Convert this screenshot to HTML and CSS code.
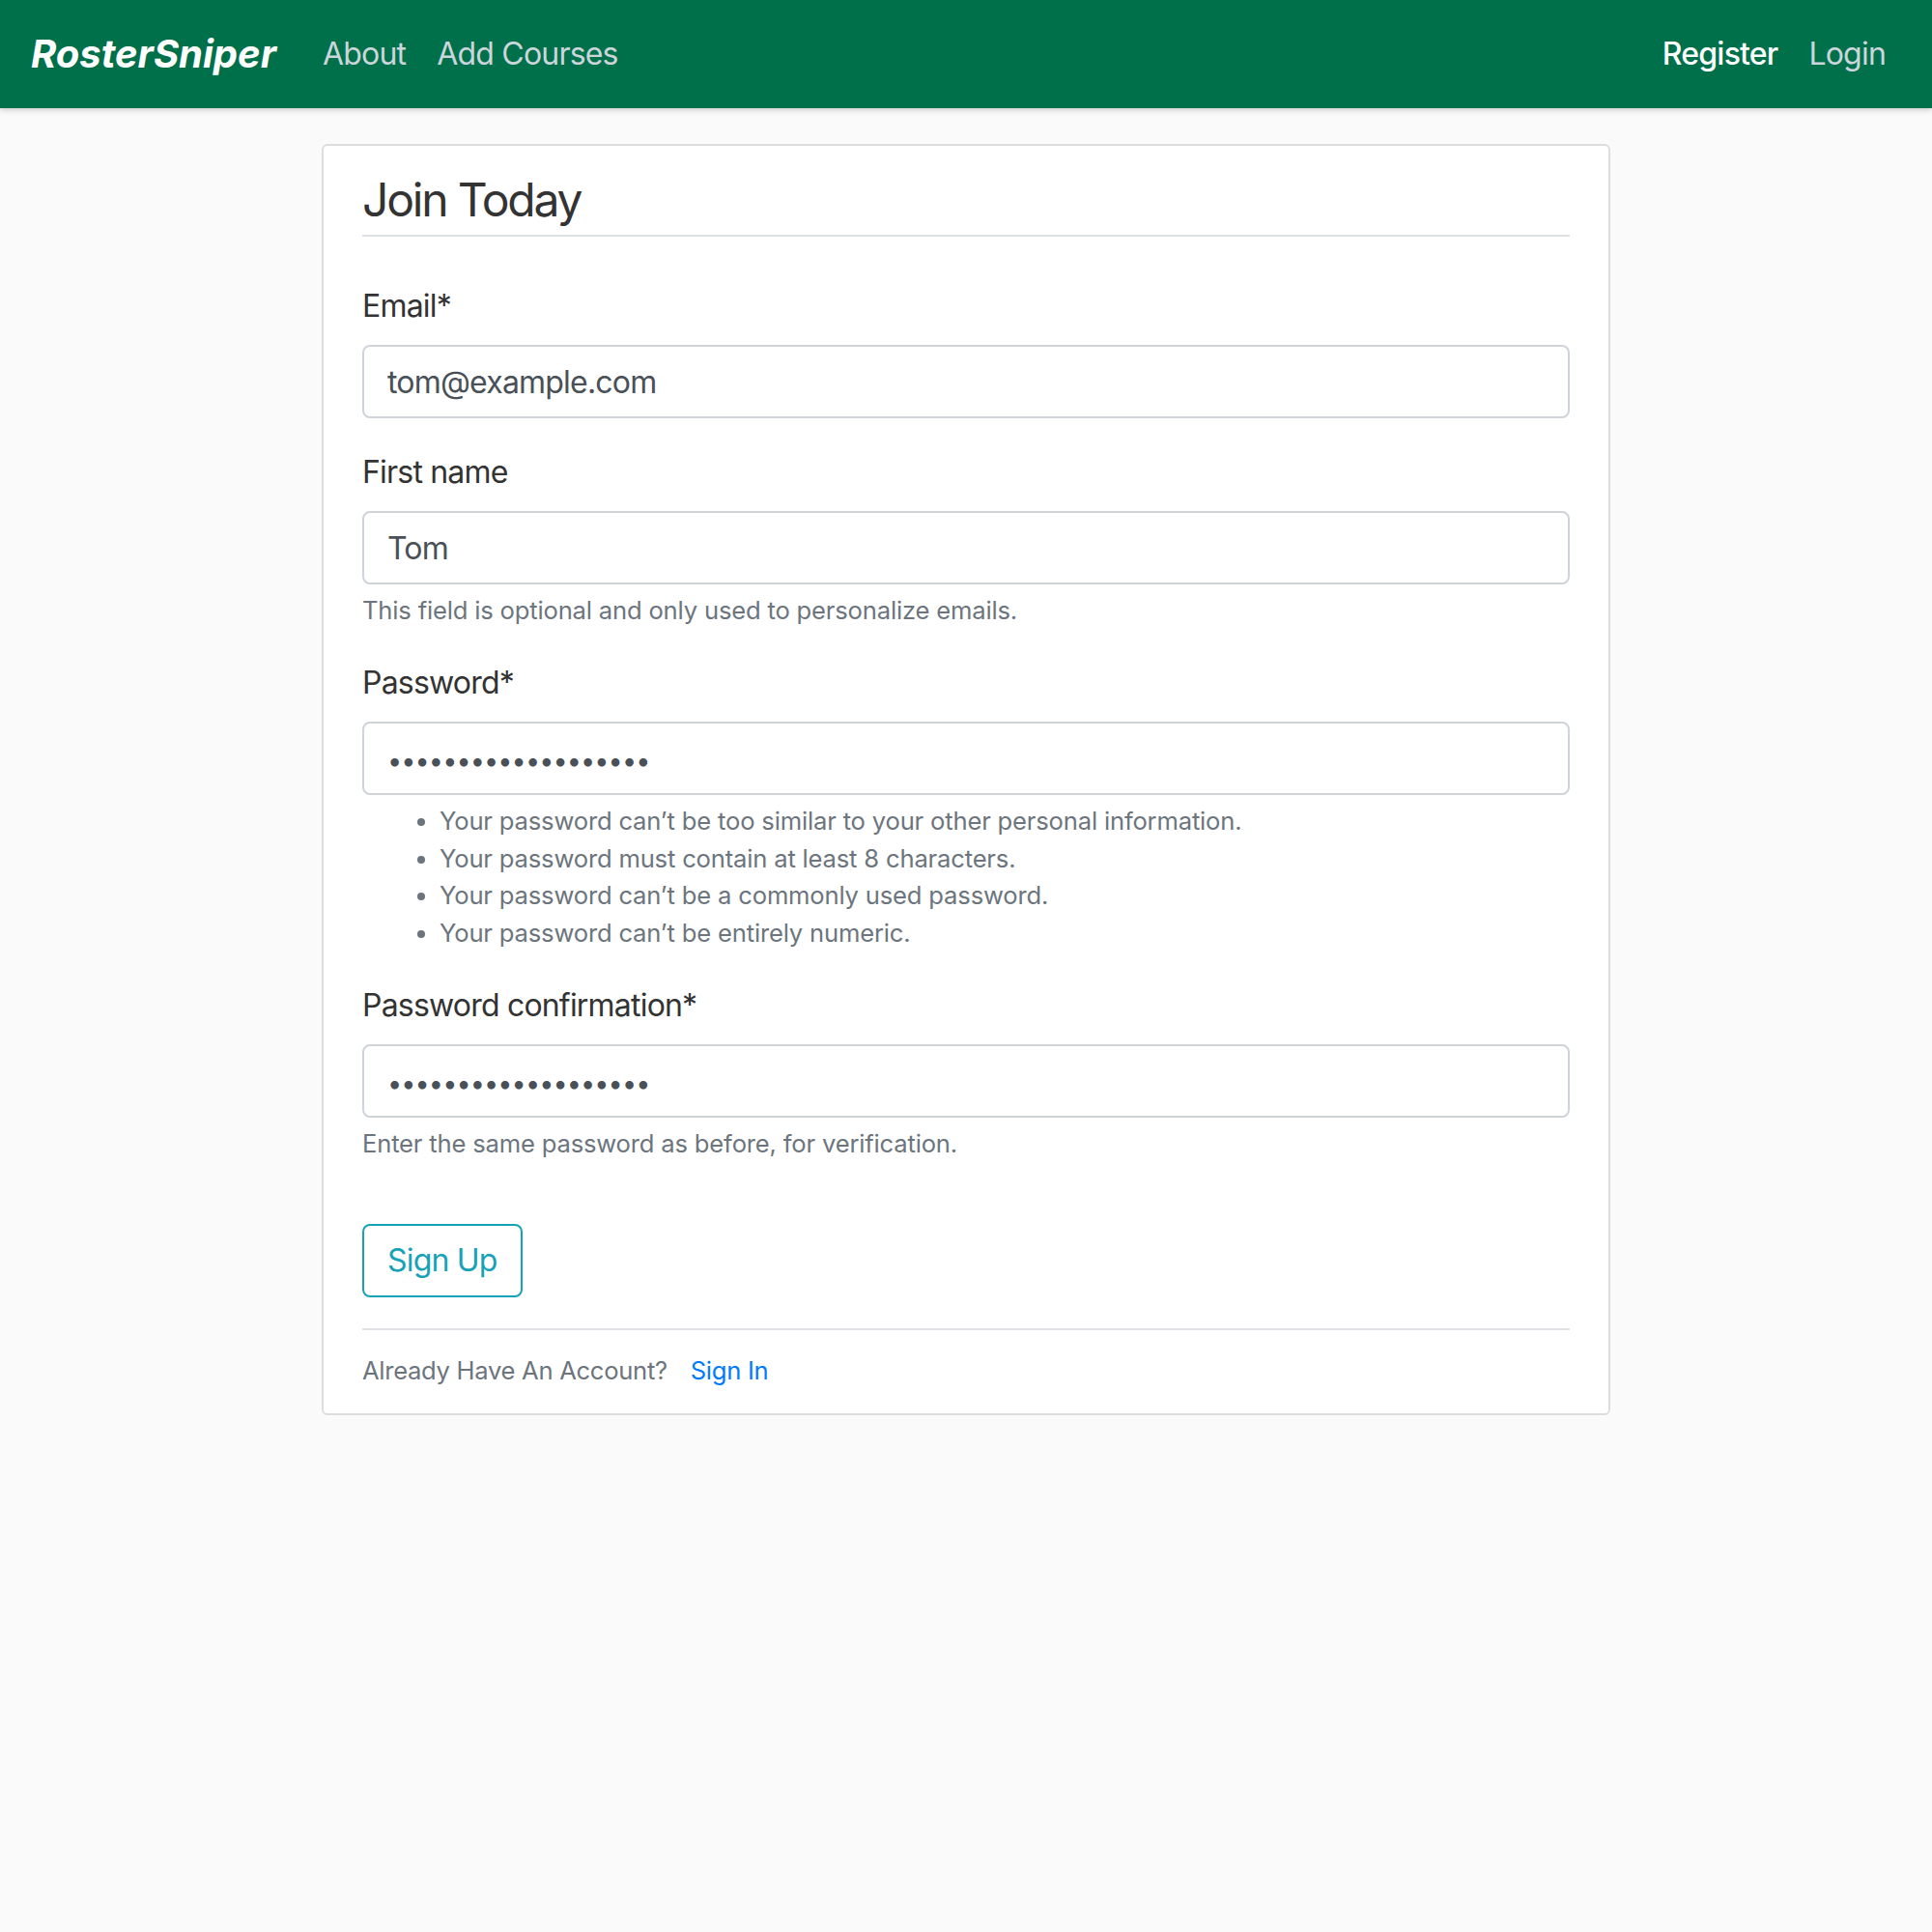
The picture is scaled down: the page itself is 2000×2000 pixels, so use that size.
FILE: index.html
```html
<!DOCTYPE html>
<html lang="en">
<head>
<meta charset="utf-8">
<title>Register - RosterSniper</title>
<link rel="stylesheet" href="styles.css">
</head>
<body>
<header class="site-header">
  <nav class="navbar">
    <a class="brand" href="#">RosterSniper</a>
    <div class="nav-left">
      <a class="nav-link" href="#">About</a>
      <a class="nav-link" href="#">Add Courses</a>
    </div>
    <div class="nav-right">
      <a class="nav-link active" href="#">Register</a>
      <a class="nav-link" href="#">Login</a>
    </div>
  </nav>
</header>
<main class="container">
  <div class="content-section">
    <form>
      <fieldset class="fieldset">
        <div class="legend">Join Today</div>
        <div class="form-group">
          <label class="label" for="email">Email*</label>
          <input class="form-control" id="email" type="email" value="tom@example.com">
        </div>
        <div class="form-group">
          <label class="label" for="fname">First name</label>
          <input class="form-control" id="fname" type="text" value="Tom">
          <small class="form-text">This field is optional and only used to personalize emails.</small>
        </div>
        <div class="form-group">
          <label class="label" for="pw1">Password*</label>
          <input class="form-control pw" id="pw1" type="password" value="abcdefghijklmnopqrs">
          <small class="form-text">
            <ul class="help-list">
              <li>Your password can’t be too similar to your other personal information.</li>
              <li>Your password must contain at least 8 characters.</li>
              <li>Your password can’t be a commonly used password.</li>
              <li>Your password can’t be entirely numeric.</li>
            </ul>
          </small>
        </div>
        <div class="form-group">
          <label class="label" for="pw2">Password confirmation*</label>
          <input class="form-control pw" id="pw2" type="password" value="abcdefghijklmnopqrs">
          <small class="form-text">Enter the same password as before, for verification.</small>
        </div>
      </fieldset>
      <div class="form-group">
        <button class="btn" type="button">Sign Up</button>
      </div>
    </form>
    <div class="account">
      <small class="muted">Already Have An Account?</small><a class="signin" href="#">Sign In</a>
    </div>
  </div>
</main>
</body>
</html>
```

FILE: styles.css
```css
* { box-sizing: border-box; }

body {
  margin: 0;
  background: #fafafa;
  color: #333333;
  font-family: Inter, "Noto Sans", sans-serif;
  font-size: 32px;
  line-height: 48px;
  letter-spacing: -0.8px;
}

.site-header {
  background: #00704a;
  box-shadow: 0 2px 6px rgba(0, 0, 0, 0.18);
}

.navbar {
  display: flex;
  align-items: center;
  height: 112px;
  padding: 0 32px;
}

.brand {
  font-size: 40px;
  line-height: 60px;
  font-weight: 700;
  font-style: italic;
  letter-spacing: 0;
  color: #ffffff;
  text-decoration: none;
  margin-right: 32px;
}

.nav-left {
  display: flex;
  flex: 1;
}

.nav-right {
  display: flex;
}

.nav-link {
  padding: 0 16px;
  color: #cbd5db;
  text-decoration: none;
}

.nav-link.active {
  color: #ffffff;
  font-weight: 500;
}

.container {
  width: 1334px;
  margin: 37px auto 0;
}

.content-section {
  background: #ffffff;
  border: 2px solid #dddddd;
  border-radius: 6px;
  padding: 20px 40px;
}

.fieldset {
  border: 0;
  margin: 0 0 32px;
  padding: 0;
  min-width: 0;
  display: flow-root;
}

.legend {
  font-size: 48px;
  line-height: 72px;
  letter-spacing: -2.2px;
  border-bottom: 2px solid #dee2e6;
  margin-bottom: 48px;
}

.form-group {
  margin-bottom: 32px;
}

.label {
  display: block;
  margin-bottom: 16px;
}

.form-control {
  display: block;
  width: 100%;
  height: 76px;
  padding: 12px 24px;
  font: inherit;
  letter-spacing: inherit;
  color: #495057;
  background: #ffffff;
  border: 2px solid #ced4da;
  border-radius: 8px;
  outline: none;
}

.form-control.pw {
  font-size: 27px;
  letter-spacing: -0.9px;
  padding-top: 14px;
  padding-bottom: 10px;
}

.form-text {
  display: block;
  margin-top: 8px;
  font-size: 25.6px;
  line-height: 38.4px;
  letter-spacing: -0.18px;
  color: #6c757d;
}

.help-list {
  margin: 0 0 32px;
  padding-left: 80px;
}

.btn {
  display: inline-block;
  height: 76px;
  padding: 12px 24px;
  font: inherit;
  letter-spacing: inherit;
  line-height: 48px;
  color: #17a2b8;
  background: transparent;
  border: 2px solid #17a2b8;
  border-radius: 8px;
}

.account {
  border-top: 2px solid #dee2e6;
  padding-top: 16px;
}

.muted {
  font-size: 25.6px;
  letter-spacing: -0.3px;
  color: #6c757d;
}

.signin {
  margin-left: 24px;
  font-size: 25.6px;
  letter-spacing: -0.3px;
  color: #007bff;
  text-decoration: none;
}
```
